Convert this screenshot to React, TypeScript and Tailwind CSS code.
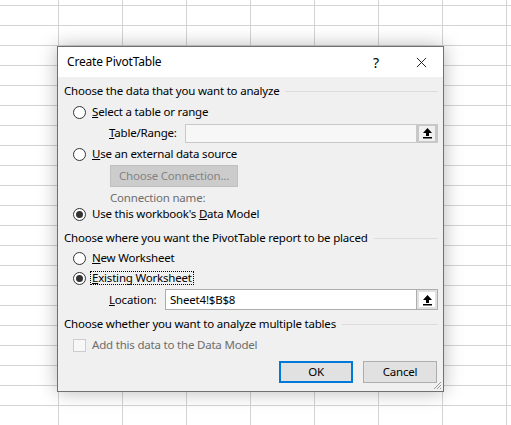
import React from "react";

const font = { fontFamily: '"Noto Sans", "Open Sans", sans-serif' };

function Radio({ checked }: { checked?: boolean }) {
  return (
    <span className="flex h-[13px] w-[13px] shrink-0 items-center justify-center rounded-full border border-[#333333] bg-white">
      {checked && <span className="h-[7px] w-[7px] rounded-full bg-[#333333]" />}
    </span>
  );
}

function UpArrow({ color = "#000" }: { color?: string }) {
  return (
    <svg viewBox="0 0 11 12" className="h-[12px] w-[11px]" aria-hidden="true">
      <path d="M5.5 1 L10 6 L7 6 L7 9 L4 9 L4 6 L1 6 Z" fill={color} />
      <rect x="1" y="10" width="9" height="1.5" fill={color} />
    </svg>
  );
}

function Section({ title }: { title: string }) {
  return (
    <div className="flex h-[20px] items-center gap-[6px] pl-[6px] pr-[5px]">
      <span className="whitespace-nowrap text-[#000]">{title}</span>
      <span className="h-px flex-1 bg-[#dcdcdc]" />
    </div>
  );
}

export default function App() {
  return (
    <div
      className="relative h-[425px] w-[511px] overflow-hidden bg-white bg-[linear-gradient(to_right,#d4d4d4_1px,transparent_1px),linear-gradient(to_bottom,#d4d4d4_1px,transparent_1px)] bg-[size:64px_20px] bg-[position:58px_5px] text-[11.5px] tracking-[-0.2px] text-black"
      style={font}
    >
      {/* dialog window */}
      <div className="absolute left-[57px] top-[46px] flex h-[346px] w-[387px] flex-col border border-[#707070] bg-[#f0f0f0] shadow-[0_0_18px_rgba(0,0,0,0.28)]">
        {/* title bar */}
        <div className="flex h-[30px] shrink-0 items-center bg-white pl-[9px]">
          <span className="flex-1 text-[12px]">Create PivotTable</span>
          <span className="w-[20px] text-center text-[14px]">?</span>
          <span className="ml-[28px] mr-[15px] flex w-[14px] items-center justify-center">
            <svg viewBox="0 0 12 12" className="h-[11px] w-[11px]" aria-hidden="true">
              <path d="M1 1 L11 11 M11 1 L1 11" stroke="#111" strokeWidth="1" />
            </svg>
          </span>
        </div>

        <div className="flex flex-col pt-[4px]">
          <Section title="Choose the data that you want to analyze" />

          <div className="mt-[1px] flex h-[20px] items-center gap-[6px] pl-[15px]">
            <Radio />
            <span>
              <u>S</u>elect a table or range
            </span>
          </div>

          <div className="mt-[1px] flex h-[20px] items-center pl-[51px] pr-[5px]">
            <span className="w-[76px]">
              <u>T</u>able/Range:
            </span>
            <div className="flex h-[19px] flex-1 border border-[#c8c8c8] bg-[#c8c8c8]">
              <div className="flex-1 bg-[#f7f7f7]" />
              <div className="ml-[1px] flex w-[20px] items-center justify-center bg-[#c8c8c8]">
                <div className="flex h-[15px] w-[16px] items-center justify-center bg-[#f0f0f0]">
                  <UpArrow />
                </div>
              </div>
            </div>
          </div>

          <div className="mt-[1px] flex h-[20px] items-center gap-[6px] pl-[15px]">
            <Radio />
            <span>
              <u>U</u>se an external data source
            </span>
          </div>

          <div className="mt-[1px] pl-[52px]">
            <div className="flex h-[22px] w-[128px] items-center justify-center border border-[#bfbfbf] bg-[#cccccc] text-[#838383]">
              Choose Connection...
            </div>
          </div>

          <div className="mt-[3px] flex h-[16px] items-center pl-[52px] text-[#6d6d6d]">
            Connection name:
          </div>

          <div className="flex h-[16px] items-center gap-[6px] pl-[15px]">
            <Radio checked />
            <span>
              Use this workbook's <u>D</u>ata Model
            </span>
          </div>

          <div className="mt-[6px]">
            <Section title="Choose where you want the PivotTable report to be placed" />
          </div>

          <div className="flex h-[20px] items-center gap-[6px] pl-[15px]">
            <Radio />
            <span>
              <u>N</u>ew Worksheet
            </span>
          </div>

          <div className="flex h-[20px] items-center gap-[4px] pl-[15px]">
            <Radio checked />
            <span className="border border-dotted border-black px-[1px] leading-[12px]">
              <u>E</u>xisting Worksheet
            </span>
          </div>

          <div className="mt-[1px] flex h-[21px] items-center pl-[51px] pr-[5px]">
            <span className="w-[56px]">
              <u>L</u>ocation:
            </span>
            <div className="flex h-[21px] flex-1 border border-[#adadad] bg-white">
              <div className="flex flex-1 items-center pl-[4px]">Sheet4!$B$8</div>
              <div className="flex w-[21px] items-center justify-center border-l border-[#adadad] bg-[#e1e1e1]">
                <div className="flex h-[15px] w-[16px] items-center justify-center bg-white">
                  <UpArrow />
                </div>
              </div>
            </div>
          </div>

          <div className="mt-[4px]">
            <Section title="Choose whether you want to analyze multiple tables" />
          </div>

          <div className="mt-[1px] flex h-[20px] items-center gap-[6px] pl-[15px] text-[#6d6d6d]">
            <span className="h-[13px] w-[13px] shrink-0 border border-[#cccccc] bg-[#f7f7f7]" />
            <span>Add this data to the Data Model</span>
          </div>

          <div className="mt-[6px] flex justify-end gap-[10px] pr-[6px]">
            <div className="flex h-[22px] w-[74px] items-center justify-center border-2 border-[#0078d7] bg-[#e1e1e1]">
              OK
            </div>
            <div className="flex h-[22px] w-[74px] items-center justify-center border border-[#adadad] bg-[#e1e1e1]">
              Cancel
            </div>
          </div>
        </div>

        {/* resize grip */}
        <svg viewBox="0 0 10 10" className="absolute bottom-[1px] right-[1px] h-[10px] w-[10px]" aria-hidden="true">
          <path d="M9 2 L2 9 M9 5 L5 9 M9 8 L8 9" stroke="#9a9a9a" strokeWidth="1" />
        </svg>
      </div>
    </div>
  );
}
